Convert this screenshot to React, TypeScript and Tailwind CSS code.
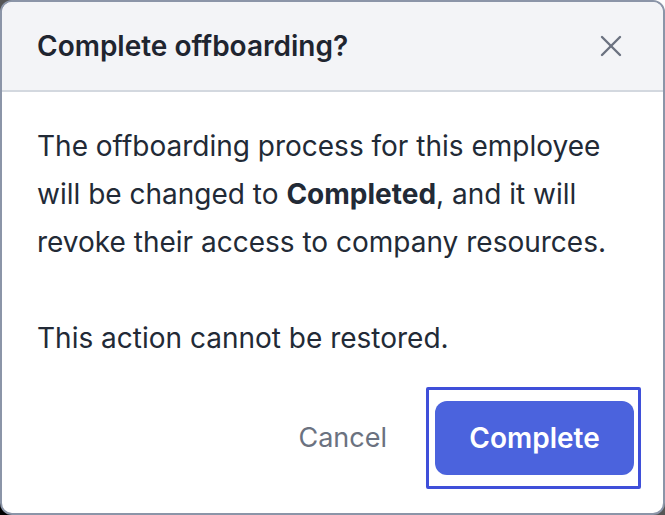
import { X } from 'lucide-react'

export default function App() {
  return (
    <div className="w-[665px] h-[515px] bg-gradient-to-bl from-white via-[#555] to-black" style={{ fontFamily: 'Inter, "Noto Sans", sans-serif' }}>
      <div className="w-full h-full flex flex-col bg-white border-2 border-[#8b95a8] rounded-[12px] overflow-hidden">
        <div className="h-[90px] shrink-0 flex items-center justify-between pl-[35px] pr-[34px] bg-[#f3f4f7] border-b-2 border-[#d3d8df]">
          <h2 className="text-[28px] font-semibold text-[#1f2530]">Complete offboarding?</h2>
          <X className="w-[36px] h-[36px] text-[#6b7280]" strokeWidth={1.6} />
        </div>
        <div className="flex-1 flex flex-col pl-[35px] pr-[22px] pt-[30px]">
          <p className="w-[585px] text-[28px] leading-[48px] text-[#222a36]">
            The offboarding process for this employee will be changed to <strong className="font-bold">Completed</strong>, and it will revoke their access to company resources.
          </p>
          <p className="mt-[48px] text-[28px] leading-[48px] text-[#222a36]">This action cannot be restored.</p>
          <div className="mt-auto mb-[24px] flex items-center justify-end gap-[39px]">
            <button className="text-[27px] text-[#6b7280]">Cancel</button>
            <div className="w-[215px] h-[102px] flex items-center pl-[6px] border-[3px] border-[#3f4fd9] rounded-[2px]">
              <button className="w-[199px] h-[74px] rounded-[12px] bg-[#4b63dd] text-white text-[28px] font-semibold">Complete</button>
            </div>
          </div>
        </div>
      </div>
    </div>
  )
}
